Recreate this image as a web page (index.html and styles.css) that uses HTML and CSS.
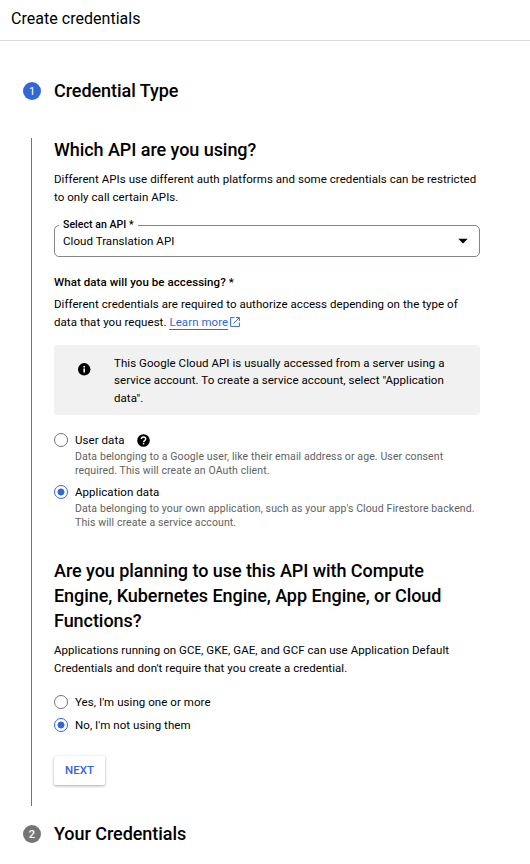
FILE: index.html
```html
<!DOCTYPE html>
<html lang="en">
<head>
<meta charset="utf-8">
<title>Create credentials</title>
<link rel="stylesheet" href="styles.css">
</head>
<body>
<header class="topbar">Create credentials</header>
<main class="stepper">
  <div class="step"><span class="badge active">1</span><h2>Credential Type</h2></div>
  <section class="panel">
    <h2>Which API are you using?</h2>
    <p class="intro">Different APIs use different auth platforms and some credentials can be restricted<br>to only call certain APIs.</p>
    <div class="select">
      <span class="label">Select an API *</span>
      <span class="value">Cloud Translation API</span>
      <svg width="10" height="6" viewBox="0 0 10 6"><path d="M.3.7h9.4L5 5.6z"/></svg>
    </div>
    <h3>What data will you be accessing? *</h3>
    <p class="access">Different credentials are required to authorize access depending on the type of<br>data that you request. <a class="link" href="#">Learn more</a><svg class="external" width="10" height="10" viewBox="0 0 10 10"><path d="M4.5.6H.6v8.8h8.8V5.5M6 .6h3.4V4M9.2.8 3.4 6.6"/></svg></p>
    <div class="info">
      <svg width="13" height="13" viewBox="0 0 13 13"><circle cx="6.2" cy="6.3" r="6.2"/><path fill="#fff" d="M5.4 3h1.6v1.5H5.4zM5.4 5.4h1.6v4.2H5.4z"/></svg>
      <p>This Google Cloud API is usually accessed from a server using a<br>service account. To create a service account, select "Application<br>data".</p>
    </div>
    <div class="option">
      <span class="radio"></span><span class="name">User data</span>
      <svg class="help" width="13" height="13" viewBox="0 0 13 13"><circle cx="6.5" cy="6.5" r="6.3"/><path fill="none" stroke="#fff" stroke-width="1.4" d="M4.4 5.1c0-2.8 4.3-2.7 4.3-.1 0 1.6-2.1 1.6-2.1 3.2"/><path fill="#fff" d="M5.9 9h1.4v1.4H5.9z"/></svg>
    </div>
    <p class="hint">Data belonging to a Google user, like their email address or age. User consent<br>required. This will create an OAuth client.</p>
    <div class="option second"><span class="radio checked"></span><span class="name">Application data</span></div>
    <p class="hint">Data belonging to your own application, such as your app's Cloud Firestore backend.<br>This will create a service account.</p>
    <h2 class="planning">Are you planning to use this API with Compute<br>Engine, Kubernetes Engine, App Engine, or Cloud<br>Functions?</h2>
    <p class="apps">Applications running on GCE, GKE, GAE, and GCF can use Application Default<br>Credentials and don't require that you create a credential.</p>
    <div class="option yes"><span class="radio"></span><span class="name">Yes, I'm using one or more</span></div>
    <div class="option no"><span class="radio checked"></span><span class="name">No, I'm not using them</span></div>
    <button class="next">NEXT</button>
  </section>
  <div class="step last"><span class="badge">2</span><h2>Your Credentials</h2></div>
</main>
</body>
</html>
```
FILE: styles.css
```css
* { box-sizing: border-box; }
body { margin: 0; height: 864px; overflow: hidden; background: #fff; color: #000; font: 400 11.5px/18px Roboto, sans-serif; letter-spacing: .057px; white-space: nowrap; }
p, h2, h3 { margin: 0; }
svg { display: block; flex: none; }
.topbar { height: 41px; padding: 0 11px; border-bottom: 1px solid #dadce0; font-size: 16px; line-height: 37px; letter-spacing: .03px; }
h2 { font-size: 18px; line-height: 25px; font-weight: 500; letter-spacing: -.055px; }
.stepper { padding: 37px 50px 0 23px; }
.step { display: flex; align-items: center; gap: 13px; height: 26px; }
.step h2 { height: 26px; line-height: 26px; }
.badge { width: 18px; height: 18px; border-radius: 50%; background: #757575; color: #fff; font-size: 11px; line-height: 19px; font-weight: 500; text-align: center; letter-spacing: 0; }
.badge.active { background: #3367d6; font-weight: 400; }
.panel { height: 668px; margin: 34px 0 0 8px; padding-left: 22px; border-left: 1px solid #757575; }
.panel > h2:first-child { line-height: 23px; }
.intro { margin-top: 9px; }
.select { position: relative; display: flex; align-items: center; justify-content: space-between; height: 32px; margin-top: 19px; padding: 0 11px 0 8px; border: 1px solid #80868b; border-radius: 5px; }
.label { position: absolute; left: 4px; top: -8px; padding: 0 4px; background: #fff; font-size: 10.5px; line-height: 14px; font-weight: 500; }
h3 { margin-top: 16px; font-size: 11.5px; line-height: 18px; font-weight: 500; letter-spacing: .07px; }
.access { margin-top: 4px; }
.link { color: #3367d6; text-decoration: none; border-bottom: 1px solid #3367d6; padding-bottom: 0; }
.external { display: inline-block; margin-left: 2px; vertical-align: -1px; fill: none; stroke: #3367d6; stroke-width: 1; }
.info { display: flex; gap: 23px; height: 70px; margin-top: 14px; padding: 9.5px 24px; border-radius: 4px; background: #f1f1f1; line-height: 17.5px; }
.info svg { margin-top: 8px; }
.option { display: flex; align-items: center; height: 18px; margin-top: 16px; }
.radio { width: 14px; height: 14px; margin-right: 7px; border: 1px solid #757575; border-radius: 50%; }
.radio.checked { border-color: #3367d6; background: radial-gradient(circle, #3367d6 3.2px, transparent 3.8px); }
.help { margin-left: 12px; }
.hint { margin: 1px 0 0 21px; color: #616161; font-size: 10.5px; line-height: 14px; letter-spacing: .11px; }
.option.second { margin-top: 5px; }
.planning { margin-top: 28px; }
.apps { margin-top: 8px; }
.option.yes { margin-top: 16px; }
.option.no { margin-top: 5px; }
.next { display: block; width: 51px; height: 29px; margin-top: 22px; padding: 0; border: 0; border-radius: 2px; background: #fff; color: #3367d6; font: 500 11.5px/29px Roboto, sans-serif; box-shadow: 0 1px 3px rgba(0,0,0,.35); }
.step.last { margin-top: 15px; }
```
